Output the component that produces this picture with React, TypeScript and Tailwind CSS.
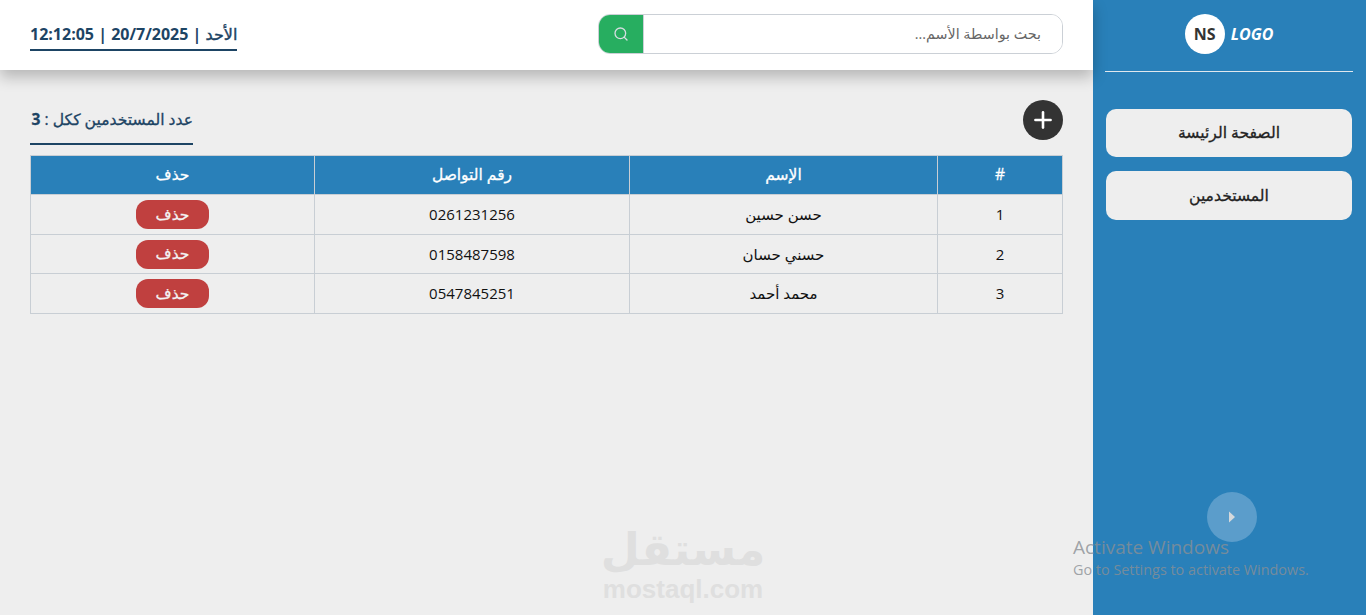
import { Plus, Search } from "lucide-react";

const users = [
  { id: 1, name: "حسن حسين", phone: "0261231256" },
  { id: 2, name: "حسني حسان", phone: "0158487598" },
  { id: 3, name: "محمد أحمد", phone: "0547845251" },
];

const rowHeights = ["h-[40px]", "h-[39px]", "h-[40px]"];

export default function App() {
  return (
    <div className="relative flex h-[615px] w-[1366px] overflow-hidden bg-[#eeeeee] font-['Open_Sans','DejaVu_Sans',sans-serif] text-[15px] text-[#111111]">
      <main className="flex w-[1093px] flex-col">
        <header className="z-10 flex h-[70px] items-center justify-between bg-white px-[30px] shadow-[0_7px_14px_rgba(0,0,0,0.24)]">
          <div className="mt-[1px] border-b-2 border-[#1d4464] pb-[2px] text-[16px] leading-[26px] font-bold whitespace-nowrap text-[#1d4464]" dir="rtl">
            <span className="font-normal [-webkit-text-stroke:0.4px_#1d4464]">الأحد</span> | 20/7/2025 | 12:12:05
          </div>
          <div className="-mt-[2px] flex h-[40px] w-[465px] overflow-hidden rounded-[12px] border border-[#cbd0d6]">
            <button className="flex w-[45px] items-center justify-center border-r border-[#cbd0d6] bg-[#27ae60]">
              <Search size={16} strokeWidth={2} className="text-[#d5dde0]" />
            </button>
            <input
              dir="rtl"
              placeholder="بحث بواسطة الأسم..."
              className="flex-1 bg-white pr-[21px] text-[14.3px] outline-none placeholder:text-[#666666]"
            />
          </div>
        </header>

        <section className="px-[30px]">
          <div className="mt-[30px] flex h-[45px] items-start justify-between">
            <div className="w-[163px] border-b-2 border-[#1d4464] pb-[4px] text-right text-[15.6px] leading-[39px] whitespace-nowrap text-[#1d4464] [-webkit-text-stroke:0.3px_#1d4464]" dir="rtl">
              عدد المستخدمين ككل : <span className="font-bold">3</span>
            </div>
            <button className="flex h-[40px] w-[40px] items-center justify-center rounded-full bg-[#333333]">
              <Plus size={26} strokeWidth={2.4} className="text-white" />
            </button>
          </div>

          <table dir="rtl" className="mt-[10px] w-[1033px] table-fixed border-collapse text-center">
            <thead>
              <tr className="h-[39px] bg-[#2980b9] text-[15.5px] text-white [&>th]:[-webkit-text-stroke:0.3px_#ffffff]">
                <th className="w-[125px] border border-[#c8ced4] font-normal">#</th>
                <th className="w-[308px] border border-[#c8ced4] font-normal">الإسم</th>
                <th className="w-[315px] border border-[#c8ced4] font-normal">رقم التواصل</th>
                <th className="border border-[#c8ced4] font-normal">حذف</th>
              </tr>
            </thead>
            <tbody>
              {users.map((user, index) => (
                <tr key={user.id} className={rowHeights[index]}>
                  <td className="border border-[#c8ced4] p-0">{user.id}</td>
                  <td className="border border-[#c8ced4] p-0">{user.name}</td>
                  <td className="border border-[#c8ced4] p-0">{user.phone}</td>
                  <td className="border border-[#c8ced4] p-0">
                    <button className="h-[29px] w-[73px] rounded-[12px] bg-[#c0403f] text-[15.5px] text-[#f3f3f3] [-webkit-text-stroke:0.3px_#f3f3f3]">حذف</button>
                  </td>
                </tr>
              ))}
            </tbody>
          </table>
        </section>
      </main>

      <aside className="flex w-[273px] flex-col items-start bg-[#2980b9] pl-[13px]">
        <div className="-ml-[1px] flex h-[72px] w-[248px] items-start justify-center gap-[6px] border-b-[1.5px] border-[#dfe8ee] pt-[14px]">
          <div className="flex h-[40px] w-[40px] items-center justify-center rounded-full bg-white text-[16px] font-bold text-[#333333]">NS</div>
          <span className="mt-[7px] text-[16px] leading-[26px] font-bold text-white italic">LOGO</span>
        </div>
        <nav className="mt-[37px] flex w-[246px] flex-col gap-[14px]">
          <button className="h-[48px] rounded-[10px] bg-[#eeeeee] text-[15.6px] text-[#222222] [-webkit-text-stroke:0.3px_#222222]">الصفحة الرئيسة</button>
          <button className="h-[49px] rounded-[10px] bg-[#eeeeee] text-[15.6px] text-[#222222] [-webkit-text-stroke:0.3px_#222222]">المستخدمين</button>
        </nav>
      </aside>

      {/* watermarks on top of the screenshot */}
      <div className="pointer-events-none absolute top-[525px] left-[602px] flex w-[162px] flex-col items-center text-[#dfdfdf]">
        <div className="font-['DejaVu_Sans',sans-serif] text-[45px] leading-[50px] font-bold whitespace-nowrap" dir="rtl">مستقل</div>
        <div className="font-['Liberation_Sans',sans-serif] text-[26px] leading-[28px] font-bold">mostaql.com</div>
      </div>
      <div className="absolute top-[492px] left-[1207px] flex h-[50px] w-[50px] items-center justify-center rounded-full bg-[#5b9dcb]">
        <svg width="8" height="12" viewBox="0 0 8 12">
          <path d="M1 0.5 L7 6 L1 11.5 Z" fill="#d5d9dc" />
        </svg>
      </div>
      <div className="pointer-events-none absolute top-[536px] left-[1073px] font-['Open_Sans',sans-serif] whitespace-nowrap text-[#8a8f94]/80">
        <div className="text-[19px] leading-[22px]">Activate Windows</div>
        <div className="mt-[2px] text-[14.4px] leading-[20px]">Go to Settings to activate Windows.</div>
      </div>
    </div>
  );
}
